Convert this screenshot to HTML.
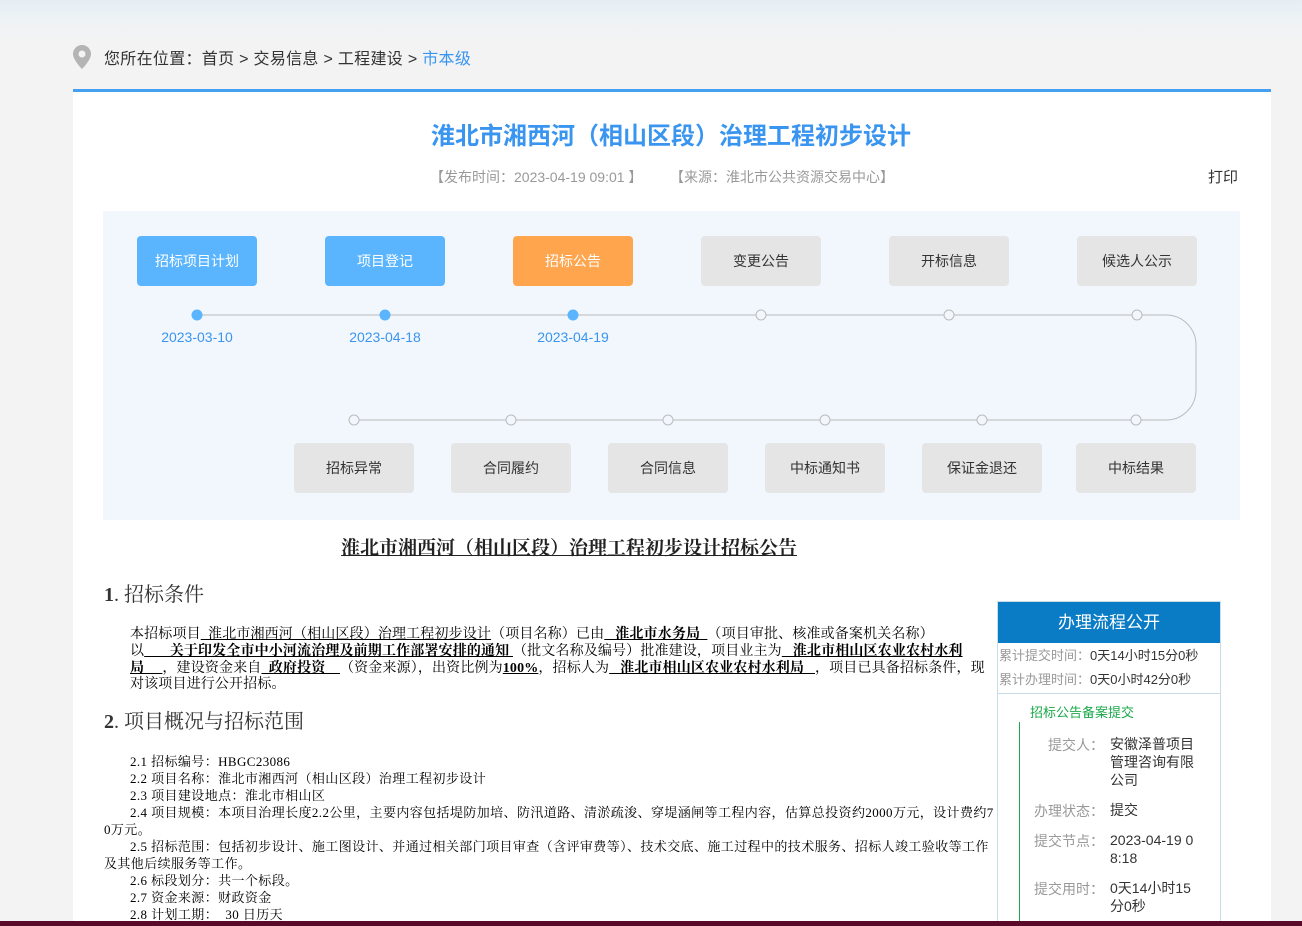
<!DOCTYPE html>
<html><head><meta charset="utf-8">
<style>
*{margin:0;padding:0;box-sizing:border-box}
html,body{width:1302px;height:926px;overflow:hidden}
body{position:relative;background:#f3f3f3;font-family:"Liberation Sans","Noto Sans CJK SC",sans-serif;color:#333}
.abs{position:absolute}
.top{left:0;top:0;width:1302px;height:40px;background:linear-gradient(180deg,#e4eef3 0%,#eef3f5 50%,#f3f3f3 100%)}
.crumb{left:104px;top:45px;font-size:16px;color:#333;white-space:nowrap;letter-spacing:0.3px}
.crumb span.a{color:#3a95f0}
.panel{left:73px;top:89px;width:1198px;height:840px;background:#fff;border-top:3px solid #46a0f0}
.title{left:0;width:1302px;top:116px;text-align:center;font-size:24px;font-weight:bold;color:#3a95f0;padding-left:40px}
.meta{top:167px;font-size:14px;color:#999;white-space:nowrap}
.tl{left:103px;top:211px;width:1137px;height:309px;background:#f2f7fd}
.btn{width:120px;height:50px;border-radius:4px;text-align:center;line-height:50px;font-size:14px;color:#333;background:#e5e5e5}
.blue{background:#5ab5fe;color:#fff}
.org{background:#ffa54e;color:#fff}
.date{font-size:14px;color:#3a95f0;width:120px;text-align:center}
.ser{font-family:"Liberation Serif","Noto Serif CJK SC",serif}
.body{font-family:"Liberation Serif","Noto Serif CJK SC",serif;font-size:13px;color:#000;line-height:16.5px}
.p1{font-size:14px;letter-spacing:0.15px}
.side{left:997px;top:601px;width:224px;height:340px;border:1px solid #c9dcea;background:#fff}
.sh{height:41px;background:#0a7cc6;color:#fff;font-size:17px;text-align:center;line-height:41px}
.row{font-size:13px;color:#333;white-space:nowrap;height:24px;line-height:24px;padding-left:1px}
.row span{color:#999}
.lbl{color:#999;font-size:14px;text-align:right;width:90px}
.val{font-size:14px;color:#333;width:88px;line-height:18px;word-break:break-all}
</style></head><body>
<div class="abs top"></div>
<svg class="abs" style="left:71px;top:44px" width="22" height="26" viewBox="0 0 22 26"><path d="M11 1C6 1 2 5 2 10c0 6 9 15 9 15s9-9 9-15c0-5-4-9-9-9z" fill="#b4b4b4"/><circle cx="11" cy="10" r="3.5" fill="#f3f3f3"/></svg>
<div class="abs crumb">您所在位置：首页&nbsp;&gt;&nbsp;交易信息&nbsp;&gt;&nbsp;工程建设&nbsp;&gt;&nbsp;<span class="a">市本级</span></div>
<div class="abs panel"></div>
<div class="abs title">淮北市湘西河（相山区段）治理工程初步设计</div>
<div class="abs meta" style="left:430px">【发布时间：2023-04-19 09:01 】</div>
<div class="abs meta" style="left:670px">【来源：淮北市公共资源交易中心】</div>
<div class="abs" style="left:1208px;top:166px;font-size:15px;color:#333">打印</div>

<div class="abs tl"></div>
<svg class="abs" style="left:0;top:0" width="1302" height="926">
<path d="M197 315 H1166 A30 30 0 0 1 1196 345 V390 A30 30 0 0 1 1166 420 H354" fill="none" stroke="#bbb" stroke-width="1"/>
<g fill="#5ab5fe"><circle cx="197" cy="315" r="5.5"/><circle cx="385" cy="315" r="5.5"/><circle cx="573" cy="315" r="5.5"/></g>
<g fill="#f2f7fd" stroke="#bbb"><circle cx="761" cy="315" r="5"/><circle cx="949" cy="315" r="5"/><circle cx="1137" cy="315" r="5"/>
<circle cx="354" cy="420" r="5"/><circle cx="511" cy="420" r="5"/><circle cx="668" cy="420" r="5"/><circle cx="825" cy="420" r="5"/><circle cx="982" cy="420" r="5"/><circle cx="1136" cy="420" r="5"/></g>
</svg>
<div class="abs btn blue" style="left:137px;top:236px">招标项目计划</div>
<div class="abs btn blue" style="left:325px;top:236px">项目登记</div>
<div class="abs btn org" style="left:513px;top:236px">招标公告</div>
<div class="abs btn" style="left:701px;top:236px">变更公告</div>
<div class="abs btn" style="left:889px;top:236px">开标信息</div>
<div class="abs btn" style="left:1077px;top:236px">候选人公示</div>
<div class="abs date" style="left:137px;top:329px">2023-03-10</div>
<div class="abs date" style="left:325px;top:329px">2023-04-18</div>
<div class="abs date" style="left:513px;top:329px">2023-04-19</div>
<div class="abs btn" style="left:294px;top:443px">招标异常</div>
<div class="abs btn" style="left:451px;top:443px">合同履约</div>
<div class="abs btn" style="left:608px;top:443px">合同信息</div>
<div class="abs btn" style="left:765px;top:443px">中标通知书</div>
<div class="abs btn" style="left:922px;top:443px">保证金退还</div>
<div class="abs btn" style="left:1076px;top:443px">中标结果</div>

<div class="abs ser" style="left:341px;top:533px;font-size:19px;font-weight:bold;color:#222;text-decoration:underline;white-space:nowrap">淮北市湘西河（相山区段）治理工程初步设计招标公告</div>
<div class="abs ser" style="left:104px;top:578px;font-size:20px;color:#333;white-space:nowrap"><b>1</b>. 招标条件</div>
<div class="abs body p1" style="left:130px;top:627px;width:880px;white-space:nowrap">本招标项目<u>&nbsp;&nbsp;淮北市湘西河（相山区段）治理工程初步设计</u>（项目名称）已由<u><b>&nbsp;&nbsp;&nbsp;淮北市水务局&nbsp;&nbsp;</b></u>（项目审批、核准或备案机关名称）</div>
<div class="abs body p1" style="left:130px;top:644px;width:858px;word-break:break-all">以<u><b>&nbsp;&nbsp;&nbsp;&nbsp;&nbsp;&nbsp;&nbsp;关于印发全市中小河流治理及前期工作部署安排的通知&nbsp;</b></u>（批文名称及编号）批准建设，项目业主为<u><b>&nbsp;&nbsp;&nbsp;淮北市相山区农业农村水利局&nbsp;&nbsp;&nbsp;&nbsp;&nbsp;</b></u>，建设资金来自<u><b>&nbsp;&nbsp;政府投资&nbsp;&nbsp;&nbsp;&nbsp;</b></u>（资金来源），出资比例为<u><b>100%</b></u>，招标人为<u><b>&nbsp;&nbsp;&nbsp;淮北市相山区农业农村水利局&nbsp;&nbsp;&nbsp;</b></u>，项目已具备招标条件，现对该项目进行公开招标。</div>
<div class="abs ser" style="left:104px;top:705px;font-size:20px;color:#333;white-space:nowrap"><b>2</b>. 项目概况与招标范围</div>
<div class="abs body" style="left:104px;top:753px;width:895px;line-height:17px;letter-spacing:0.4px">
<div style="padding-left:26px">2.1 招标编号：HBGC23086</div>
<div style="padding-left:26px">2.2 项目名称：淮北市湘西河（相山区段）治理工程初步设计</div>
<div style="padding-left:26px">2.3 项目建设地点：淮北市相山区</div>
<div style="text-indent:26px;word-break:break-all">2.4 项目规模：本项目治理长度2.2公里，主要内容包括堤防加培、防汛道路、清淤疏浚、穿堤涵闸等工程内容，估算总投资约2000万元，设计费约70万元。</div>
<div style="text-indent:26px;word-break:break-all">2.5 招标范围：包括初步设计、施工图设计、并通过相关部门项目审查（含评审费等）、技术交底、施工过程中的技术服务、招标人竣工验收等工作及其他后续服务等工作。</div>
<div style="padding-left:26px">2.6 标段划分：共一个标段。</div>
<div style="padding-left:26px">2.7 资金来源：财政资金</div>
<div style="padding-left:26px">2.8 计划工期：&nbsp;&nbsp;30 日历天</div>
</div>

<div class="abs side">
<div class="sh">办理流程公开</div>
<div class="row" style="margin-top:1px"><span>累计提交时间：</span>0天14小时15分0秒</div>
<div class="row"><span>累计办理时间：</span>0天0小时42分0秒</div>
<div style="border-top:1px solid #c9dcea;margin-top:1px"></div>
<div style="font-size:13px;color:#1aa84a;padding-left:32px;margin-top:8px">招标公告备案提交</div>
<div class="abs" style="left:21px;top:120px;width:1px;height:220px;background:#1aa84a"></div>
<div class="abs lbl" style="left:16px;top:133px">提交人：</div><div class="abs val" style="left:112px;top:133px">安徽泽普项目管理咨询有限公司</div>
<div class="abs lbl" style="left:16px;top:199px">办理状态：</div><div class="abs val" style="left:112px;top:199px">提交</div>
<div class="abs lbl" style="left:16px;top:229px">提交节点：</div><div class="abs val" style="left:112px;top:229px">2023-04-19 08:18</div>
<div class="abs lbl" style="left:16px;top:277px">提交用时：</div><div class="abs val" style="left:112px;top:277px">0天14小时15分0秒</div>
</div>
<div class="abs" style="left:0;top:921px;width:1302px;height:5px;background:#5a0a28"></div>
</body></html>
